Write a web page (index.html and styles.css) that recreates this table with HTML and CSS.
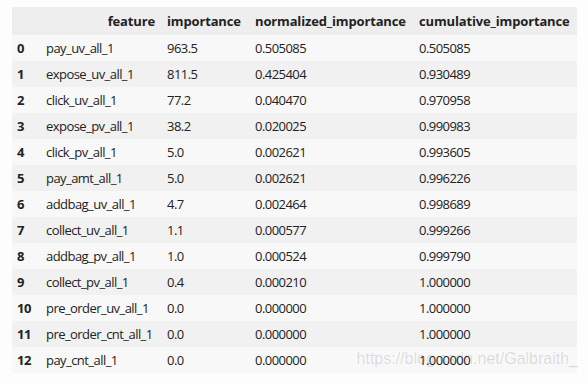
FILE: index.html
```html
<!DOCTYPE html>
<html>
<head>
<meta charset="utf-8">
<link rel="stylesheet" href="styles.css">
</head>
<body>
<div class="frame">
<table class="df">
  <colgroup>
    <col class="c-idx"><col class="c-feat"><col class="c-imp"><col class="c-norm"><col class="c-cum">
  </colgroup>
  <thead>
    <tr><th></th><th class="r">feature</th><th>importance</th><th>normalized_importance</th><th>cumulative_importance</th></tr>
  </thead>
  <tbody>
    <tr><th>0</th><td>pay_uv_all_1</td><td>963.5</td><td>0.505085</td><td>0.505085</td></tr>
    <tr><th>1</th><td>expose_uv_all_1</td><td>811.5</td><td>0.425404</td><td>0.930489</td></tr>
    <tr><th>2</th><td>click_uv_all_1</td><td>77.2</td><td>0.040470</td><td>0.970958</td></tr>
    <tr><th>3</th><td>expose_pv_all_1</td><td>38.2</td><td>0.020025</td><td>0.990983</td></tr>
    <tr><th>4</th><td>click_pv_all_1</td><td>5.0</td><td>0.002621</td><td>0.993605</td></tr>
    <tr><th>5</th><td>pay_amt_all_1</td><td>5.0</td><td>0.002621</td><td>0.996226</td></tr>
    <tr><th>6</th><td>addbag_uv_all_1</td><td>4.7</td><td>0.002464</td><td>0.998689</td></tr>
    <tr><th>7</th><td>collect_uv_all_1</td><td>1.1</td><td>0.000577</td><td>0.999266</td></tr>
    <tr><th>8</th><td>addbag_pv_all_1</td><td>1.0</td><td>0.000524</td><td>0.999790</td></tr>
    <tr><th>9</th><td>collect_pv_all_1</td><td>0.4</td><td>0.000210</td><td>1.000000</td></tr>
    <tr><th>10</th><td>pre_order_uv_all_1</td><td>0.0</td><td>0.000000</td><td>1.000000</td></tr>
    <tr><th>11</th><td>pre_order_cnt_all_1</td><td>0.0</td><td>0.000000</td><td>1.000000</td></tr>
    <tr><th>12</th><td>pay_cnt_all_1</td><td>0.0</td><td>0.000000</td><td>1.000000</td></tr>
  </tbody>
</table>
<div class="watermark">https://blog.csdn.net/Galbraith_</div>
</div>
</body>
</html>
```

FILE: styles.css
```css
html, body {
  margin: 0;
  padding: 0;
  background: #fdfdfd;
}
.frame {
  position: relative;
  padding: 7px 11px 0 12px;
  width: 565px;
}
.df {
  border-collapse: collapse;
  table-layout: fixed;
  width: 565px;
  font-family: "Open Sans", "Noto Sans", sans-serif;
  font-size: 13px;
  letter-spacing: -0.55px;
  color: #222;
}
.c-idx { width: 28px; }
.c-feat { width: 121px; }
.c-imp { width: 88px; }
.c-norm { width: 164px; }
.c-cum { width: 164px; }
.df th, .df td {
  padding: 0 6px;
  text-align: left;
  white-space: nowrap;
  overflow: hidden;
}
.df tbody th, .df tbody td {
  height: 26px;
}
.df tbody th {
  padding-left: 5px;
  padding-right: 0;
  font-weight: 700;
}
.df thead th {
  height: 28px;
  background: #eeeeee;
  font-weight: 700;
  letter-spacing: -0.15px;
}
.df thead th.r {
  text-align: right;
}
.df tbody tr:nth-child(odd) { background: #f8f8f8; }
.df tbody tr:nth-child(even) { background: #f1f1f1; }
.watermark {
  position: absolute;
  right: 10px;
  top: 350px;
  font-family: "Liberation Sans", Arial, sans-serif;
  font-size: 16px;
  color: rgba(0, 0, 0, 0.13);
}
```
